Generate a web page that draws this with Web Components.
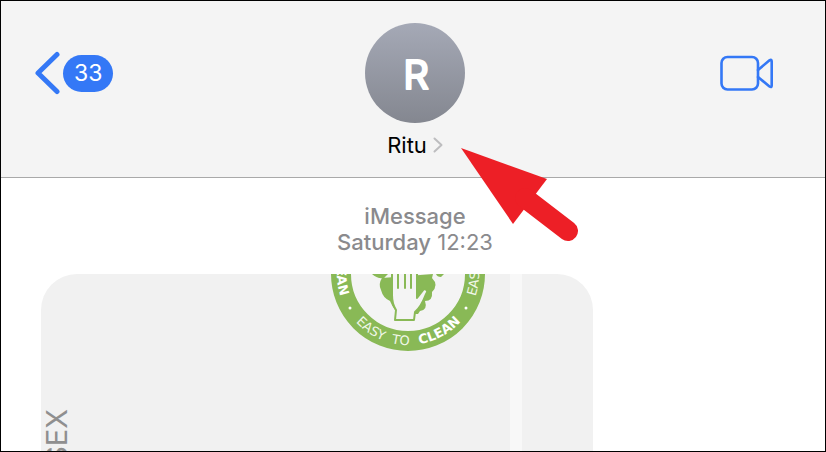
<!DOCTYPE html>
<html lang="en">
<head>
<meta charset="utf-8">
<meta name="viewport" content="width=device-width, initial-scale=1">
<title>Messages</title>
<style>
    body{
        margin: 0;
        font-family: Inter, "Liberation Sans", sans-serif;
    }
</style>
</head>
<body>
<message-screen>
    <chat-header slot="header" unread="33" name="Ritu"></chat-header>
    <message-stamp slot="body" service="iMessage" day="Saturday">12:23</message-stamp>
    <photo-bubble slot="body">SEX</photo-bubble>
    <pointer-arrow slot="overlay"></pointer-arrow>
</message-screen>

<script>
class MessageScreen extends HTMLElement{
    constructor(){
        super();
        this.attachShadow({mode:"open"});
        this.render();
    }
    render(){
        const style = `
        <style>
            :host{
                display: flex;
                flex-direction: column;
                position: relative;
                box-sizing: border-box;
                height: 100vh;
                overflow: hidden;
                border: 1px solid #000;
                background: #fff;
            }
            main{
                flex: 1;
                min-height: 0;
                display: flex;
                flex-direction: column;
                overflow: hidden;
            }
        </style>`
        const template = `
        <slot name="header"></slot>
        <main><slot name="body"></slot></main>
        <slot name="overlay"></slot>
        `
        this.shadowRoot.innerHTML = `${style} ${template}`
    }
}

class ChatHeader extends HTMLElement{
    constructor(){
        super();
        this.attachShadow({mode:"open"});
        this.render();
    }
    render(){
        const name = this.getAttribute("name");
        const style = `
        <style>
            :host{
                display: block;
                background: #f4f4f4;
                border-bottom: 1px solid #a9a9a9;
            }
            header{
                display: grid;
                grid-template-columns: 1fr auto 1fr;
                align-items: start;
                padding: 22px 29px 18px 33px;
            }
            button{
                display: flex;
                align-items: center;
                padding: 0;
                border: 0;
                background: none;
                color: #3478f6;
                font: inherit;
            }
            svg{
                display: block;
                fill: none;
                stroke: currentColor;
                stroke-linecap: round;
                stroke-linejoin: round;
            }
            .back{
                justify-self: start;
                gap: 3px;
                height: 100px;
            }
            .count{
                padding: 0 11px;
                border-radius: 19px;
                background: #3478f6;
                color: #fff;
                font-size: 23px;
                line-height: 37px;
            }
            .person{
                flex-direction: column;
                gap: 8px;
                color: #000;
            }
            .avatar{
                width: 100px;
                height: 100px;
                border-radius: 50%;
                background: linear-gradient(#a5a9b6, #848790);
            }
            .avatar text{
                fill: #fff;
                stroke: #fff;
                stroke-width: 2px;
                font-size: 40px;
                font-weight: 400;
                text-anchor: middle;
            }
            .name{
                display: flex;
                align-items: center;
                gap: 6px;
                font-size: 22px;
                line-height: 28px;
            }
            .name svg{
                color: #bdbdbf;
            }
            .video{
                justify-self: end;
                height: 100px;
                margin-right: 22px;
            }
        </style>`
        const template = `
        <header>
            <button class="back" aria-label="Back, ${this.getAttribute("unread")} unread">
                <svg width="26" height="44" viewBox="0 0 26 44" stroke-width="5"><path d="M23 3.500L4 22L23 40.500"/></svg>
                <span class="count">${this.getAttribute("unread")}</span>
            </button>
            <button class="person">
                <svg class="avatar" viewBox="0 0 100 100"><text x="51" y="66">${name[0]}</text></svg>
                <span class="name">${name}
                    <svg width="10" height="16" viewBox="0 0 10 16" stroke-width="2"><path d="M1.500 1.500L8.500 8L1.500 14.500"/></svg>
                </span>
            </button>
            <button class="video" aria-label="Start video call">
                <svg width="54" height="36" viewBox="0 0 54 36" stroke-width="2.600">
                    <rect x="1.500" y="2" width="36.500" height="32.500" rx="6"/>
                    <path d="M38 15L49.500 5.300Q51.700 4 51.700 6.500V30.500Q51.700 33 49.500 31.500L38 22"/>
                </svg>
            </button>
        </header>
        `
        this.shadowRoot.innerHTML = `${style} ${template}`
    }
}

class MessageStamp extends HTMLElement{
    constructor(){
        super();
        this.attachShadow({mode:"open"});
        this.render();
    }
    render(){
        const style = `
        <style>
            :host{
                display: block;
                padding: 25px 0 19px 4px;
                text-align: center;
                color: #8a8a8d;
                font-size: 22px;
                line-height: 26px;
            }
            p{
                margin: 0;
            }
            b{
                font-weight: 500;
            }
        </style>`
        const template = `
        <p><b>${this.getAttribute("service")}</b></p>
        <p><b>${this.getAttribute("day")}</b> <slot></slot></p>
        `
        this.shadowRoot.innerHTML = `${style} ${template}`
    }
}

class CleanBadge extends HTMLElement{
    constructor(){
        super();
        this.attachShadow({mode:"open"});
        this.render();
    }
    render(){
        const style = `
        <style>
            :host{
                display: block;
            }
            svg{
                display: block;
            }
            text{
                fill: #f0f7e8;
                font-family: "DejaVu Sans", sans-serif;
                font-size: 13px;
            }
            .bold{
                fill: #fff;
                font-weight: 700;
            }
        </style>`
        // the ring is centred on 0,0 and only its lower half shows
        const template = `
        <svg width="156" height="78" viewBox="-78 0 156 78">
            <defs><path id="ring" d="M0-71A71 71 0 0 0 0 71A71 71 0 0 0 0-71"/></defs>
            <circle r="67" fill="#f4f4f4" stroke="#89b956" stroke-width="20"/>
            <path fill="#89b956" d="M-36 0Q-31 5-24 4L-20 0ZM-26 4Q-30 10-27 16Q-25 24-18 27Q-16 32-13 36L-11 40H10L12 37Q20 36 17 27Q25 27 24 18Q31 11 24 4L25 0ZM28 0Q29 3 33 3L36 0Z"/>
            <path fill="#f4f4f4" stroke="#89b956" stroke-width="2" stroke-linejoin="round" d="M-16-4V21Q-16 30-12 36L-13 46H6L7 38Q13 33 18 20Q21 16 16 15L9 24V-4Z"/>
            <path stroke="#89b956" stroke-width="2" stroke-linecap="round" d="M-10-2V14M-3-2V14M3-2V14"/>
            <circle cx="-58" cy="34" r="1.500" fill="#fff"/>
            <circle cx="58" cy="34" r="1.500" fill="#fff"/>
            <text class="bold" text-anchor="end"><textPath href="#ring" startOffset="134">EAN</textPath></text>
            <text><textPath href="#ring" startOffset="164">EASY</textPath></text>
            <text text-anchor="middle"><textPath href="#ring" startOffset="215">TO</textPath></text>
            <text class="bold" text-anchor="end"><textPath href="#ring" startOffset="282">CLEAN</textPath></text>
            <text><textPath href="#ring" startOffset="311">EAS</textPath></text>
        </svg>
        `
        this.shadowRoot.innerHTML = `${style} ${template}`
    }
}

class PhotoBubble extends HTMLElement{
    constructor(){
        super();
        this.attachShadow({mode:"open"});
        this.render();
    }
    render(){
        const style = `
        <style>
            :host{
                flex: 1 0 auto;
                display: flex;
                box-sizing: border-box;
                width: 67%;
                height: 220px;
                margin-left: 40px;
                border-radius: 36px 36px 0 0;
                overflow: hidden;
                background: #f1f1f1;
            }
            /* printed sideways, reads from the bottom up */
            .label{
                align-self: flex-start;
                margin: 0;
                padding-bottom: 135px;
                color: #8f8f8f;
                font-size: 29px;
                line-height: 32px;
                writing-mode: vertical-rl;
                transform: rotate(180deg);
            }
            clean-badge{
                margin-left: auto;
            }
            .strip{
                width: 12px;
                margin: 0 71px 0 24px;
                background: #f8f8f8;
            }
        </style>`
        const template = `
        <p class="label"><slot></slot></p>
        <clean-badge></clean-badge>
        <div class="strip"></div>
        `
        this.shadowRoot.innerHTML = `${style} ${template}`
    }
}

class PointerArrow extends HTMLElement{
    constructor(){
        super();
        this.attachShadow({mode:"open"});
        this.render();
    }
    render(){
        const style = `
        <style>
            :host{
                display: block;
                position: absolute;
                top: 147px;
                left: calc(50% + 48px);
            }
            svg{
                display: block;
            }
        </style>`
        const template = `
        <svg width="120" height="96" viewBox="0 0 120 96" fill="#ed1f26">
            <path d="M0 0L86 31L52 76Z"/>
            <path d="M64 50L107 83" stroke="#ed1f26" stroke-width="20" stroke-linecap="round"/>
        </svg>
        `
        this.shadowRoot.innerHTML = `${style} ${template}`
    }
}

customElements.define("message-screen", MessageScreen)
customElements.define("chat-header", ChatHeader)
customElements.define("message-stamp", MessageStamp)
customElements.define("clean-badge", CleanBadge)
customElements.define("photo-bubble", PhotoBubble)
customElements.define("pointer-arrow", PointerArrow)
</script>
</body>
</html>
